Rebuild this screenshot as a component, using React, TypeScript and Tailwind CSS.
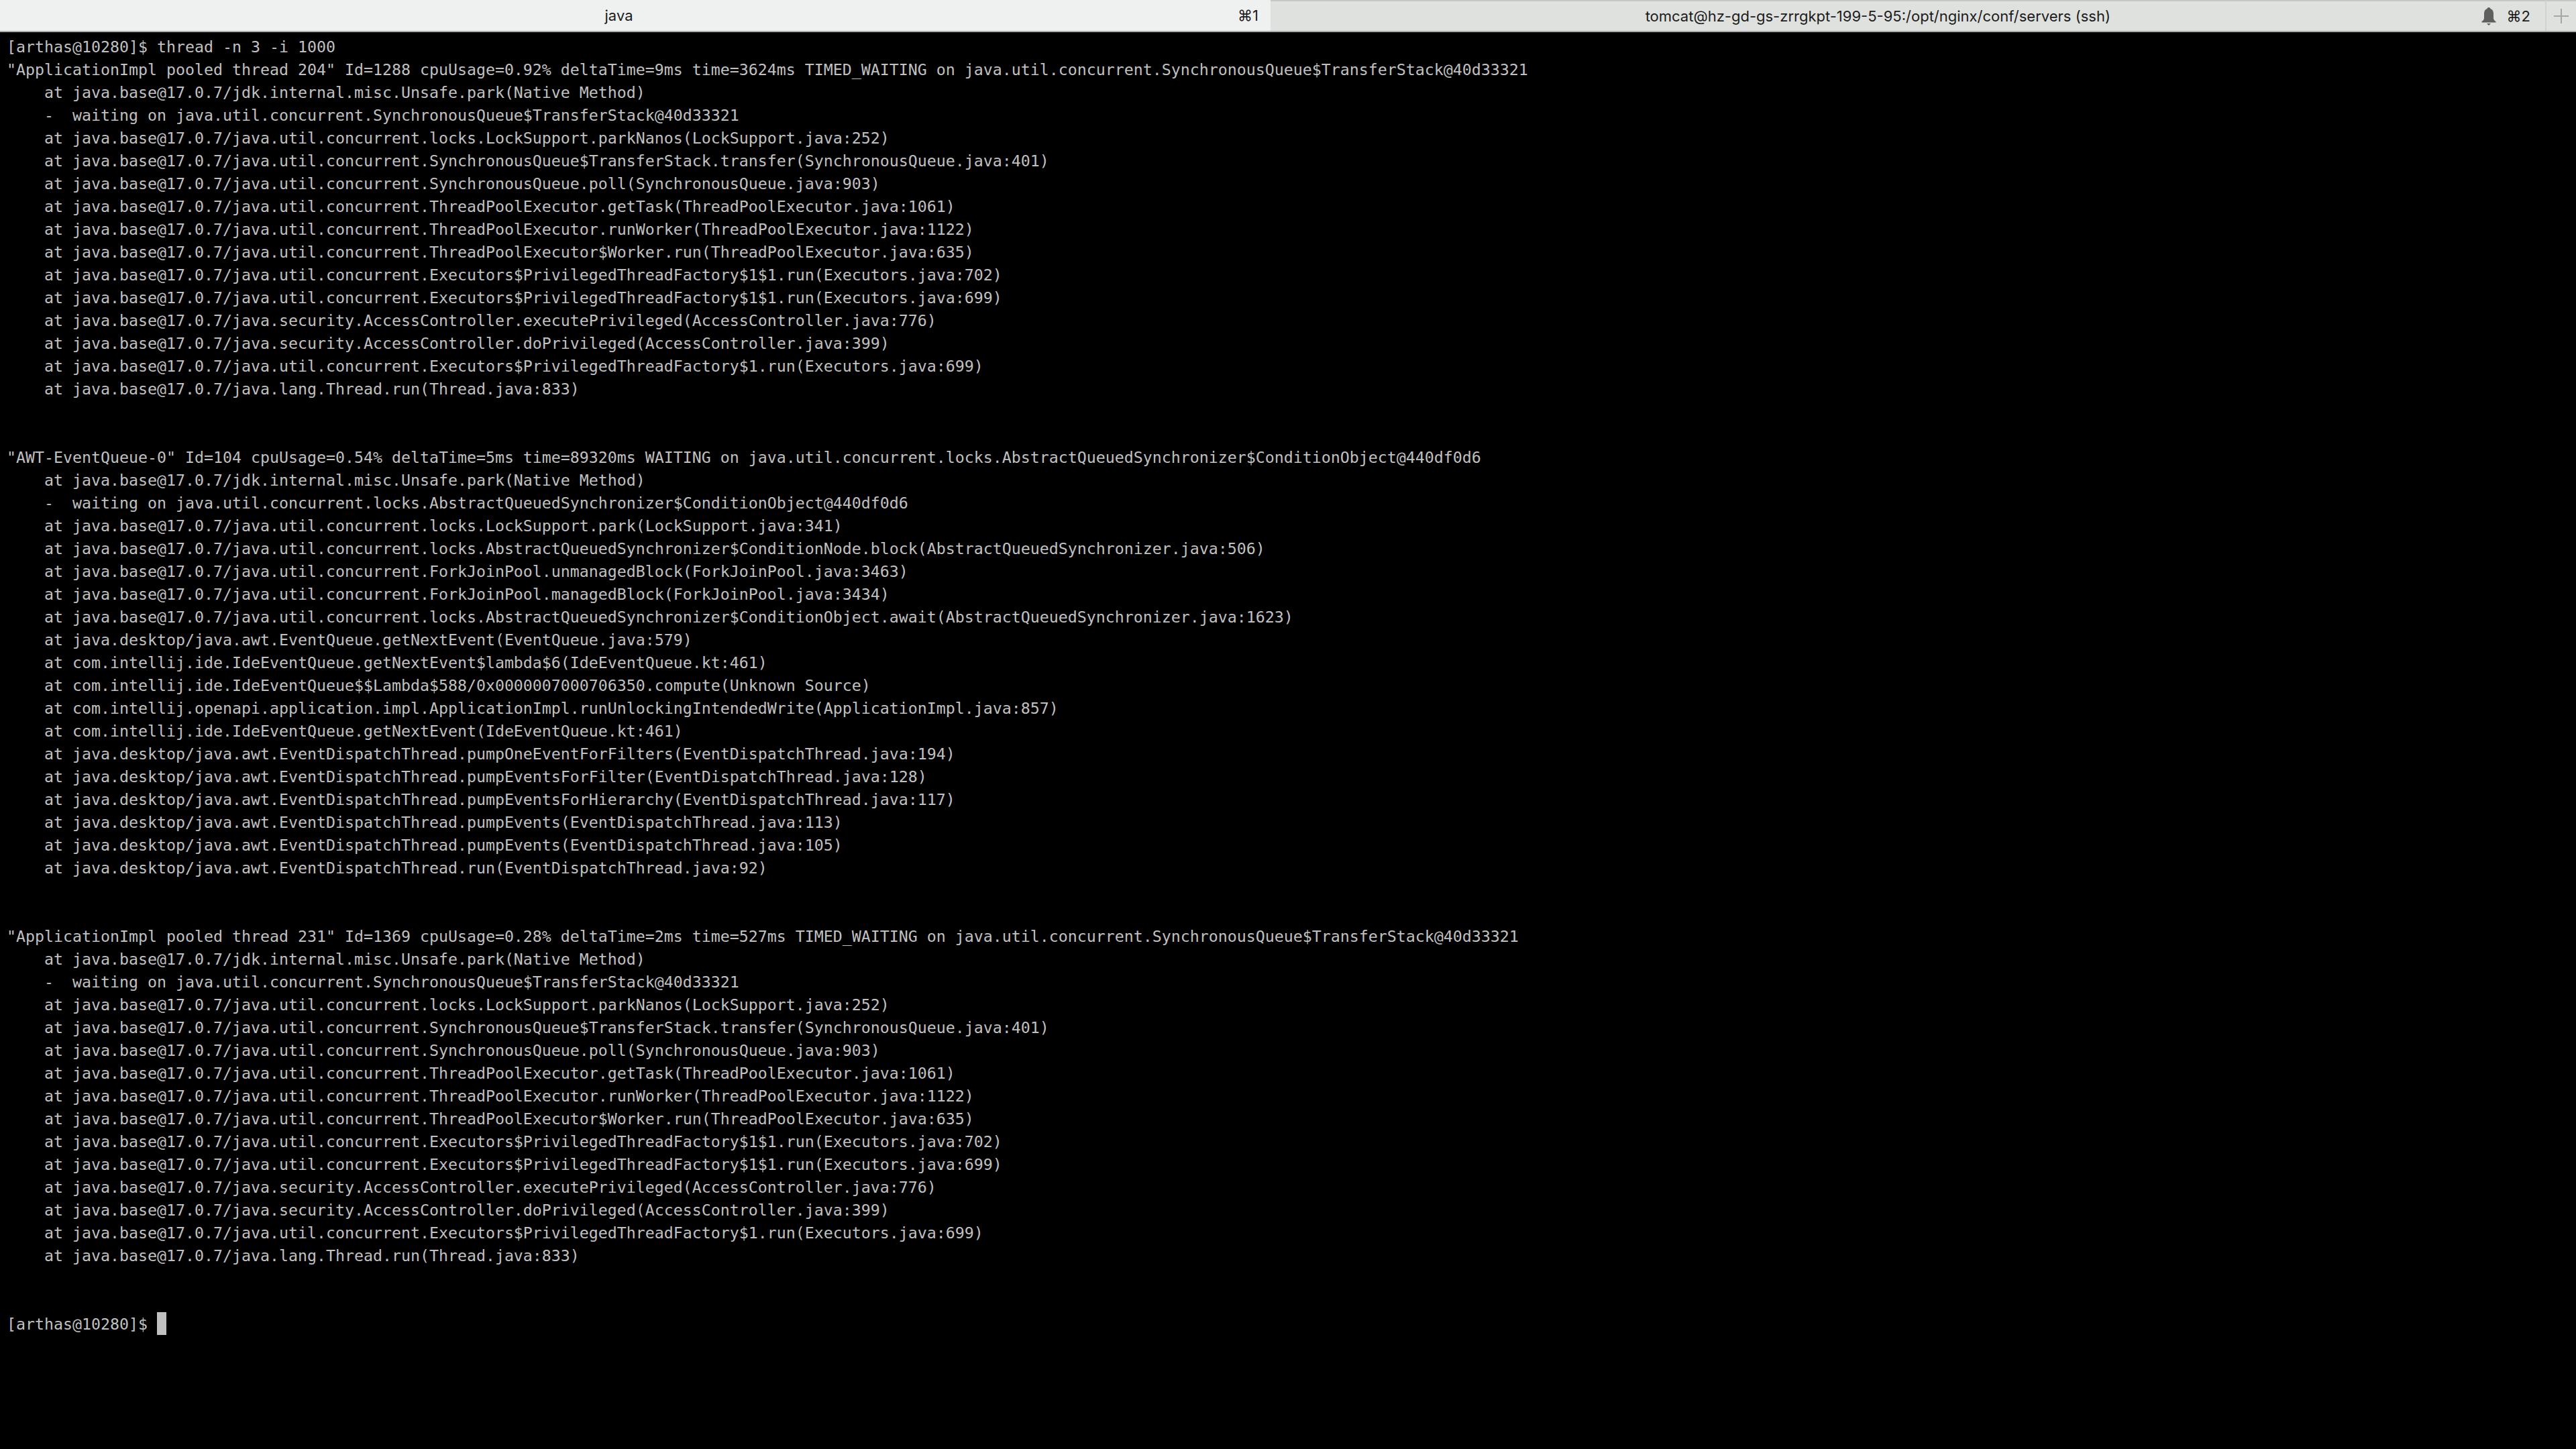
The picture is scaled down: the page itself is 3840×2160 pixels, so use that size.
import React from 'react';

const parkFrames = [
  '    at java.base@17.0.7/jdk.internal.misc.Unsafe.park(Native Method)',
  '    -  waiting on java.util.concurrent.SynchronousQueue$TransferStack@40d33321',
  '    at java.base@17.0.7/java.util.concurrent.locks.LockSupport.parkNanos(LockSupport.java:252)',
  '    at java.base@17.0.7/java.util.concurrent.SynchronousQueue$TransferStack.transfer(SynchronousQueue.java:401)',
  '    at java.base@17.0.7/java.util.concurrent.SynchronousQueue.poll(SynchronousQueue.java:903)',
  '    at java.base@17.0.7/java.util.concurrent.ThreadPoolExecutor.getTask(ThreadPoolExecutor.java:1061)',
  '    at java.base@17.0.7/java.util.concurrent.ThreadPoolExecutor.runWorker(ThreadPoolExecutor.java:1122)',
  '    at java.base@17.0.7/java.util.concurrent.ThreadPoolExecutor$Worker.run(ThreadPoolExecutor.java:635)',
  '    at java.base@17.0.7/java.util.concurrent.Executors$PrivilegedThreadFactory$1$1.run(Executors.java:702)',
  '    at java.base@17.0.7/java.util.concurrent.Executors$PrivilegedThreadFactory$1$1.run(Executors.java:699)',
  '    at java.base@17.0.7/java.security.AccessController.executePrivileged(AccessController.java:776)',
  '    at java.base@17.0.7/java.security.AccessController.doPrivileged(AccessController.java:399)',
  '    at java.base@17.0.7/java.util.concurrent.Executors$PrivilegedThreadFactory$1.run(Executors.java:699)',
  '    at java.base@17.0.7/java.lang.Thread.run(Thread.java:833)',
];

const lines = [
  '[arthas@10280]$ thread -n 3 -i 1000',
  '"ApplicationImpl pooled thread 204" Id=1288 cpuUsage=0.92% deltaTime=9ms time=3624ms TIMED_WAITING on java.util.concurrent.SynchronousQueue$TransferStack@40d33321',
  ...parkFrames,
  '',
  '',
  '"AWT-EventQueue-0" Id=104 cpuUsage=0.54% deltaTime=5ms time=89320ms WAITING on java.util.concurrent.locks.AbstractQueuedSynchronizer$ConditionObject@440df0d6',
  '    at java.base@17.0.7/jdk.internal.misc.Unsafe.park(Native Method)',
  '    -  waiting on java.util.concurrent.locks.AbstractQueuedSynchronizer$ConditionObject@440df0d6',
  '    at java.base@17.0.7/java.util.concurrent.locks.LockSupport.park(LockSupport.java:341)',
  '    at java.base@17.0.7/java.util.concurrent.locks.AbstractQueuedSynchronizer$ConditionNode.block(AbstractQueuedSynchronizer.java:506)',
  '    at java.base@17.0.7/java.util.concurrent.ForkJoinPool.unmanagedBlock(ForkJoinPool.java:3463)',
  '    at java.base@17.0.7/java.util.concurrent.ForkJoinPool.managedBlock(ForkJoinPool.java:3434)',
  '    at java.base@17.0.7/java.util.concurrent.locks.AbstractQueuedSynchronizer$ConditionObject.await(AbstractQueuedSynchronizer.java:1623)',
  '    at java.desktop/java.awt.EventQueue.getNextEvent(EventQueue.java:579)',
  '    at com.intellij.ide.IdeEventQueue.getNextEvent$lambda$6(IdeEventQueue.kt:461)',
  '    at com.intellij.ide.IdeEventQueue$$Lambda$588/0x0000007000706350.compute(Unknown Source)',
  '    at com.intellij.openapi.application.impl.ApplicationImpl.runUnlockingIntendedWrite(ApplicationImpl.java:857)',
  '    at com.intellij.ide.IdeEventQueue.getNextEvent(IdeEventQueue.kt:461)',
  '    at java.desktop/java.awt.EventDispatchThread.pumpOneEventForFilters(EventDispatchThread.java:194)',
  '    at java.desktop/java.awt.EventDispatchThread.pumpEventsForFilter(EventDispatchThread.java:128)',
  '    at java.desktop/java.awt.EventDispatchThread.pumpEventsForHierarchy(EventDispatchThread.java:117)',
  '    at java.desktop/java.awt.EventDispatchThread.pumpEvents(EventDispatchThread.java:113)',
  '    at java.desktop/java.awt.EventDispatchThread.pumpEvents(EventDispatchThread.java:105)',
  '    at java.desktop/java.awt.EventDispatchThread.run(EventDispatchThread.java:92)',
  '',
  '',
  '"ApplicationImpl pooled thread 231" Id=1369 cpuUsage=0.28% deltaTime=2ms time=527ms TIMED_WAITING on java.util.concurrent.SynchronousQueue$TransferStack@40d33321',
  ...parkFrames,
  '',
  '',
];

const BellIcon = () => (
  <svg viewBox="0 0 22 28" className="w-[22px] h-[28px]" fill="#5f5f5f">
    <path d="M11 1c-1.500 0-2.300.9-2.500 1.900C5.600 3.800 4 6.500 4 10v6.500c0 2.500-1.200 4.300-3.500 5.500v1.500h21V22c-2.300-1.200-3.500-3-3.500-5.500V10c0-3.500-1.600-6.200-4.500-7.100C13.300 1.900 12.500 1 11 1z" />
    <path d="M8 25h6l-3 3z" />
  </svg>
);

export default function App() {
  return (
    <div className="w-[3840px] h-[2160px] flex flex-col bg-black overflow-hidden">
      {/* Tab bar */}
      <div className="h-[48px] shrink-0 flex border-b-2 border-[#a9aaa9] font-['Inter','Liberation_Sans',sans-serif] text-[22px] text-[#1c1c1c]">
        <div className="w-[1894px] shrink-0 flex items-center bg-[#eff1f0] pr-[18px]">
          <span className="flex-1 text-center">java</span>
          <span>⌘1</span>
        </div>
        <div className="flex-1 flex items-center bg-[#dfe1df] border-t-2 border-[#c6c8c6] border-r-2 border-r-[#d2d4d2] pl-[6px] pr-[22px]">
          <span className="flex-1 text-center">tomcat@hz-gd-gs-zrrgkpt-199-5-95:/opt/nginx/conf/servers (ssh)</span>
          <BellIcon />
          <span className="ml-[16px]">⌘2</span>
        </div>
        <div className="w-[44px] shrink-0 flex items-center justify-center bg-[#dfe1df] border-t-2 border-[#c6c8c6]">
          <svg viewBox="0 0 22 22" className="w-[22px] h-[22px]" stroke="#a5a7a5" strokeWidth="2">
            <path d="M11 0v22M0 11h22" />
          </svg>
        </div>
      </div>

      {/* Terminal */}
      <div className="flex-1 pt-[5px] pl-[10px] font-['DejaVu_Sans_Mono','Liberation_Mono',monospace] text-[23.26px] leading-[34px] text-[#c0c0c0]">
        {lines.map((line, i) => (
          <div key={i} className="h-[34px] whitespace-pre">{line}</div>
        ))}
        <div className="h-[34px] flex whitespace-pre">
          <span>{'[arthas@10280]$ '}</span>
          <span className="w-[14px] h-[34px] -mt-[1px] bg-[#c0c0c0]" />
        </div>
      </div>
    </div>
  );
}
